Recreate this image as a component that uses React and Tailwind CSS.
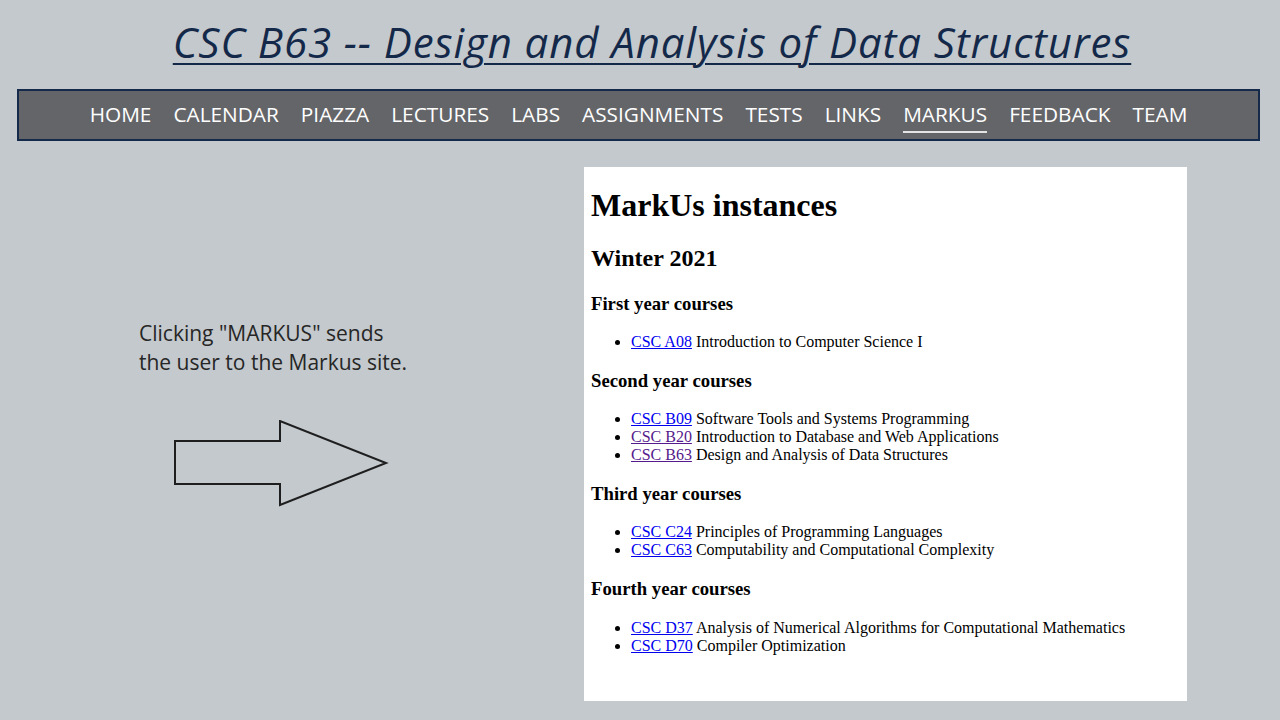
const navItems = ['HOME', 'CALENDAR', 'PIAZZA', 'LECTURES', 'LABS', 'ASSIGNMENTS', 'TESTS', 'LINKS', 'MARKUS', 'FEEDBACK', 'TEAM'];

const sections = [
  {
    title: 'First year courses',
    courses: [{ code: 'CSC A08', name: 'Introduction to Computer Science I' }],
  },
  {
    title: 'Second year courses',
    courses: [
      { code: 'CSC B09', name: 'Software Tools and Systems Programming' },
      { code: 'CSC B20', name: 'Introduction to Database and Web Applications', visited: true },
      { code: 'CSC B63', name: 'Design and Analysis of Data Structures', visited: true },
    ],
  },
  {
    title: 'Third year courses',
    courses: [
      { code: 'CSC C24', name: 'Principles of Programming Languages' },
      { code: 'CSC C63', name: 'Computability and Computational Complexity' },
    ],
  },
  {
    title: 'Fourth year courses',
    courses: [
      { code: 'CSC D37', name: 'Analysis of Numerical Algorithms for Computational Mathematics' },
      { code: 'CSC D70', name: 'Compiler Optimization' },
    ],
  },
];

function NavBar() {
  return (
    <nav className="ml-[17px] mr-[20px] h-[52px] border-2 border-[#15294a] bg-[#646569] flex items-center justify-center gap-[22px] pt-[3px]">
      {navItems.map((item) => (
        <a
          key={item}
          href="#"
          className={`text-white text-[20.8px] leading-[28px] pb-[3px] ${item === 'MARKUS' ? 'border-b-2 border-[#e4e4e4]' : 'border-b-2 border-transparent'}`}
        >
          {item}
        </a>
      ))}
    </nav>
  );
}

function Arrow() {
  return (
    <svg width="220" height="90" viewBox="0 0 220 90" className="block">
      <polygon
        points="1,21 106,21 106,1 212,43 106,85 106,64 1,64"
        fill="none"
        stroke="#1e1e1e"
        strokeWidth="2"
      />
    </svg>
  );
}

function MarkusPage() {
  return (
    <div className="w-[603px] h-[534px] bg-white px-[7px] text-black" style={{ fontFamily: '"Liberation Serif", serif' }}>
      <h1 className="text-[32px] font-bold leading-[35px] pt-[21px] mb-[22px]">MarkUs instances</h1>
      <h2 className="text-[24px] font-bold leading-[27px] mb-[20.5px]">Winter 2021</h2>
      {sections.map((s) => (
        <div key={s.title}>
          <h3 className="text-[18.72px] font-bold leading-[21px] mb-[19.6px]">{s.title}</h3>
          <ul className="list-disc pl-[40px] mb-[18.6px] text-[16px] leading-[18px]">
            {s.courses.map((c) => (
              <li key={c.code}>
                <a href="#" className={`underline ${c.visited ? 'text-[#551a8b]' : 'text-[#0000ee]'}`}>{c.code}</a> {c.name}
              </li>
            ))}
          </ul>
        </div>
      ))}
    </div>
  );
}

export default function App() {
  return (
    <div className="w-[1280px] h-[720px] bg-[#c4c9cd] overflow-hidden" style={{ fontFamily: '"Open Sans", sans-serif' }}>
      <header className="h-[89px] flex justify-center pt-[12px] pl-[24px]">
        <h1 className="italic text-[42px] leading-[60px] text-[#14294a] underline decoration-2 underline-offset-[5px] tracking-[0.9px]">
          CSC B63 -- Design and Analysis of Data Structures
        </h1>
      </header>
      <NavBar />
      <main className="flex pt-[26px]">
        <div className="w-[584px] pt-[152px]">
          <p className="pl-[139px] text-[21px] leading-[29px] text-[#262626]">
            Clicking "MARKUS" sends
            <br />
            the user to the Markus site.
          </p>
          <div className="pl-[174px] pt-[43px]">
            <Arrow />
          </div>
        </div>
        <MarkusPage />
      </main>
    </div>
  );
}
